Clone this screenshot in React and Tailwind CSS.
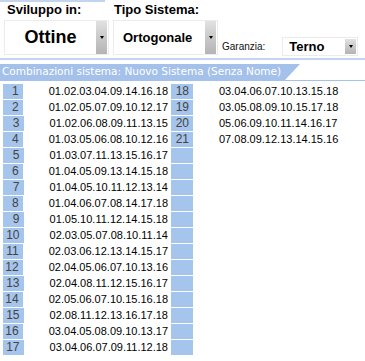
import React from "react";

const combos = [
  "01.02.03.04.09.14.16.18",
  "01.02.05.07.09.10.12.17",
  "01.02.06.08.09.11.13.15",
  "01.03.05.06.08.10.12.16",
  "01.03.07.11.13.15.16.17",
  "01.04.05.09.13.14.15.18",
  "01.04.05.10.11.12.13.14",
  "01.04.06.07.08.14.17.18",
  "01.05.10.11.12.14.15.18",
  "02.03.05.07.08.10.11.14",
  "02.03.06.12.13.14.15.17",
  "02.04.05.06.07.10.13.16",
  "02.04.08.11.12.15.16.17",
  "02.05.06.07.10.15.16.18",
  "02.08.11.12.13.16.17.18",
  "03.04.05.08.09.10.13.17",
  "03.04.06.07.09.11.12.18",
  "03.04.06.07.10.13.15.18",
  "03.05.08.09.10.15.17.18",
  "05.06.09.10.11.14.16.17",
  "07.08.09.12.13.14.15.16",
];

function DropButton({ className }) {
  return (
    <div
      className={
        "flex items-center justify-center bg-gradient-to-b from-[#e2e2e2] via-[#c9c9c9] to-[#b4b4b4] " +
        className
      }
    >
      <div className="w-0 h-0 border-l-[2.5px] border-r-[2.5px] border-t-[3px] border-l-transparent border-r-transparent border-t-black" />
    </div>
  );
}

function Row({ num, text }) {
  return (
    <div className="h-[16px] flex items-start">
      <div className="ml-[3px] w-[22px] h-[15px] bg-[#a6c5ed] text-[#444] text-[12px] leading-[15px] text-right pr-[4px]">
        {num}
      </div>
      {text && (
        <div className="ml-[26px] text-[11px] leading-[15px] text-black">
          {text}
        </div>
      )}
    </div>
  );
}

export default function App() {
  const left = combos.slice(0, 17);
  const right = Array.from({ length: 17 }, (_, i) => {
    const idx = 17 + i;
    return idx < combos.length ? { num: idx + 1, text: combos[idx] } : null;
  });

  return (
    <div className="w-[365px] h-[361px] bg-white overflow-hidden font-['Liberation_Sans',Arial,sans-serif]">
      {/* Top controls */}
      <div className="h-[2px] w-[105px] bg-[#c3d5ee]" />
      <div className="flex h-[56px]">
        <div className="ml-[4px] w-[105px] flex flex-col">
          <div className="pl-[3px] text-[13px] font-bold leading-[16px] text-black">
            Sviluppo in:
          </div>
          <div className="mt-[2px] h-[35px] border border-[#ececec] flex items-stretch">
            <div className="flex-1 flex items-center justify-center text-[18px] font-bold text-black">
              Ottine
            </div>
            <DropButton className="w-[11px] mr-[1px]" />
          </div>
        </div>
        <div className="ml-[4px] w-[105px] flex flex-col">
          <div className="pl-[1px] text-[13px] font-bold leading-[16px] text-black">
            Tipo Sistema:
          </div>
          <div className="mt-[2px] h-[35px] border border-[#ececec] flex items-stretch">
            <div className="flex-1 flex items-center pl-[9px] text-[13px] font-bold text-black">
              Ortogonale
            </div>
            <DropButton className="w-[11px] mr-[1px]" />
          </div>
        </div>
        <div className="ml-[4px] flex items-end pb-[2px]">
          <div className="text-[10px] leading-[12px] text-[#111] mb-[3px]">
            Garanzia:
          </div>
          <div className="ml-[17px] w-[76px] h-[19px] border border-[#ececec] flex items-stretch">
            <div className="flex-1 flex items-center pl-[6px] text-[13px] font-bold text-black">
              Terno
            </div>
            <DropButton className="w-[11px] my-[1px] mr-[1px]" />
          </div>
        </div>
      </div>
      <div className="h-[2px] bg-[#c2d4ee]" />

      {/* Header band */}
      <div className="mt-[4px] h-[16px] w-[300px] bg-[#a3c1ea] [clip-path:polygon(0_0,100%_0,calc(100%-15px)_100%,0_100%)] flex items-center pl-[2px] text-white text-[10.5px] font-['DejaVu_Sans',sans-serif] whitespace-nowrap">
        Combinazioni sistema: Nuovo Sistema (Senza Nome)
      </div>
      <div className="h-[1px] bg-[#a3c1ea]" />

      {/* Combinations */}
      <div className="mt-[3px] flex">
        <div className="w-[168px] flex flex-col">
          {left.map((c, i) => (
            <Row key={i} num={i + 1} text={c} />
          ))}
        </div>
        <div className="flex-1 flex flex-col">
          {right.map((r, i) => (
            <Row key={i} num={r ? r.num : ""} text={r ? r.text : null} />
          ))}
        </div>
      </div>
    </div>
  );
}
